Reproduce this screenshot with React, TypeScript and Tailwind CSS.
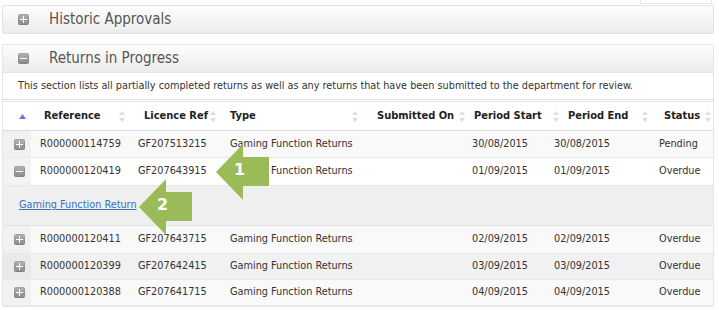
import React from "react";

const font = { fontFamily: "'DejaVu Sans Condensed','DejaVu Sans',sans-serif" };

function PM({ minus = false }: { minus?: boolean }) {
  return (
    <span className="relative inline-block w-[11px] h-[11px] rounded-[2px] bg-gradient-to-b from-[#b4b4b4] to-[#8a8a8a] shadow-[inset_0_0_0_1px_rgba(0,0,0,0.08)]">
      <span className="absolute left-[2px] top-[5px] w-[7px] h-[1px] bg-white" />
      {!minus && <span className="absolute left-[5px] top-[2px] w-[1px] h-[7px] bg-white" />}
    </span>
  );
}

function Sort() {
  return (
    <svg width="6" height="11" viewBox="0 0 6 11" className="shrink-0">
      <path d="M3 0 L6 4 L0 4 Z" fill="#dcdcdc" />
      <path d="M3 11 L6 7 L0 7 Z" fill="#dcdcdc" />
    </svg>
  );
}

type Row = { ref: string; lic: string; ps: string; pe: string; st: string; bg: string; iconBg: string; h: string; minus?: boolean };

const rowsA: Row[] = [
  { ref: "R000000114759", lic: "GF207513215", ps: "30/08/2015", pe: "30/08/2015", st: "Pending", bg: "bg-[#f9f9f9]", iconBg: "bg-[#f1f1f1]", h: "h-[27px]" },
  { ref: "R000000120419", lic: "GF207643915", ps: "01/09/2015", pe: "01/09/2015", st: "Overdue", bg: "bg-white", iconBg: "bg-[#f3f3f3]", h: "h-[28px]", minus: true },
];
const rowsB: Row[] = [
  { ref: "R000000120411", lic: "GF207643715", ps: "02/09/2015", pe: "02/09/2015", st: "Overdue", bg: "bg-[#f9f9f9]", iconBg: "bg-[#f1f1f1]", h: "h-[28px]" },
  { ref: "R000000120399", lic: "GF207642415", ps: "03/09/2015", pe: "03/09/2015", st: "Overdue", bg: "bg-[#f1f1f1]", iconBg: "bg-[#eaeaea]", h: "h-[26px]" },
  { ref: "R000000120388", lic: "GF207641715", ps: "04/09/2015", pe: "04/09/2015", st: "Overdue", bg: "bg-[#f9f9f9]", iconBg: "bg-[#f1f1f1]", h: "h-[26px]" },
];

const bodyCols = "grid grid-cols-[28px_101px_91px_142px_100px_82px_104px_64px]";

function DataRow({ r }: { r: Row }) {
  return (
    <div className={`${bodyCols} ${r.h} items-center border-b border-[#e8e8e8] text-[10.8px] text-[#333] ${r.bg}`}>
      <div className={`h-full flex items-center pl-[11px] ${r.iconBg}`}>
        <PM minus={r.minus} />
      </div>
      <div className="pl-[9px]">{r.ref}</div>
      <div className="pl-[6px]">{r.lic}</div>
      <div className="pl-[7px] whitespace-nowrap">Gaming Function Returns</div>
      <div />
      <div className="pl-[7px]">{r.ps}</div>
      <div className="pl-[7px]">{r.pe}</div>
      <div className="pl-[8px]">{r.st}</div>
    </div>
  );
}

function Arrow({ n, className }: { n: string; className: string }) {
  return (
    <div className={`absolute ${className}`}>
      <svg width="56" height="58" viewBox="0 0 56 58" className="block">
        <path d="M1 29 L28 1 L28 14 L54 14 L54 43 L28 43 L28 57 Z" fill="#9bbb59" />
      </svg>
      <span className="absolute left-[19px] top-[19px] text-[16px] font-bold text-white leading-none" style={{ fontFamily: "'DejaVu Sans',sans-serif" }}>
        {n}
      </span>
    </div>
  );
}

export default function App() {
  return (
    <div className="relative w-[719px] h-[310px] overflow-hidden bg-white" style={font}>
      <div className="flex justify-end pr-[7px]">
        <div className="w-[72px] h-[4px] border border-t-0 border-[#e6e6e6] bg-white" />
      </div>
      <div className="mx-[2px] mt-[1px] w-[712px] h-[29px] flex items-center border border-[#e3e3e3] rounded-[2px] bg-gradient-to-b from-[#fdfdfd] to-[#ececec]">
        <div className="pl-[15px] w-[46px] flex items-center"><PM /></div>
        <span className="text-[15px] text-[#555]">Historic Approvals</span>
      </div>

      <div className="mx-[2px] mt-[10px] w-[712px] border border-[#e6e6e6] rounded-[2px]">
        <div className="h-[28px] flex items-center border-b border-[#e3e3e3] bg-gradient-to-b from-[#fdfdfd] to-[#ececec]">
          <div className="pl-[15px] w-[46px] flex items-center"><PM minus /></div>
          <span className="text-[15px] text-[#555]">Returns in Progress</span>
        </div>
        <div className="h-[27px] flex items-center pl-[15px] text-[10.8px] text-[#333] border-b border-[#dedede]">
          This section lists all partially completed returns as well as any returns that have been submitted to the department for review.
        </div>
        <div className="grid grid-cols-[28px_98px_91px_142px_107px_94px_89px_63px] h-[30px] items-center mt-[1px] border-t border-[#e6e6e6] border-b border-b-[#dcdcdc] text-[11px] font-bold text-[#222]">
          <div className="pl-[16px]">
            <svg width="7" height="5" viewBox="0 0 7 5" className="block"><path d="M3.5 0 L7 5 L0 5 Z" fill="#6f74d6" /></svg>
          </div>
          <div className="flex items-center justify-between pl-[13px] pr-[4px]"><span>Reference</span><Sort /></div>
          <div className="flex items-center justify-between pl-[15px] pr-[4px]"><span>Licence Ref</span><Sort /></div>
          <div className="flex items-center justify-between pl-[10px] pr-[4px]"><span>Type</span><Sort /></div>
          <div className="flex items-center justify-between pl-[15px] pr-[4px]"><span>Submitted On</span><Sort /></div>
          <div className="flex items-center justify-between pl-[5px] pr-[4px]"><span>Period Start</span><Sort /></div>
          <div className="flex items-center justify-between pl-[5px] pr-[4px]"><span>Period End</span><Sort /></div>
          <div className="flex items-center justify-between pl-[12px] pr-[4px]"><span>Status</span><Sort /></div>
        </div>
        {rowsA.map((r) => <DataRow key={r.ref} r={r} />)}
        <div className="h-[40px] flex items-center pl-[16px] bg-[#efefef] border-b border-[#e4e4e4]">
          <a href="#" className="text-[10.8px] text-[#3572c4] underline">Gaming Function Return</a>
        </div>
        {rowsB.map((r) => <DataRow key={r.ref} r={r} />)}
      </div>

      <Arrow n="1" className="left-[215px] top-[143px]" />
      <Arrow n="2" className="left-[138px] top-[178px]" />
    </div>
  );
}
